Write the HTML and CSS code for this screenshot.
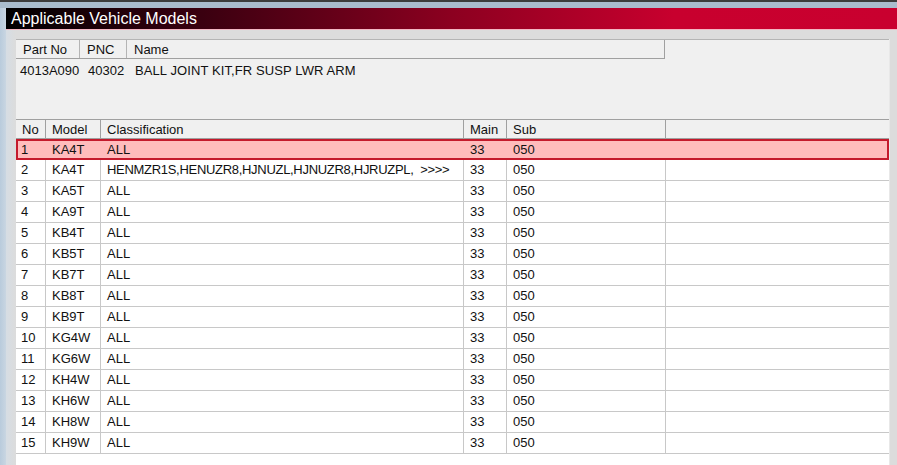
FILE: index.html
```html
<!DOCTYPE html>
<html>
<head>
<meta charset="utf-8">
<link rel="stylesheet" href="styles.css">
</head>
<body>
<div class="screen">
  <div class="topbar"></div>
  <div class="frame">
    <div class="leftstrip"></div>
    <div class="window">
      <div class="title">Applicable Vehicle Models</div>
      <div class="titleline"></div>
      <div class="content">
        <div class="panel">
          <div class="parts">
            <div class="phead">
              <div class="hc c-part">Part No</div>
              <div class="hc c-pnc">PNC</div>
              <div class="hc c-name">Name</div>
            </div>
            <div class="prow">
              <div class="pc c-part">4013A090</div>
              <div class="pc c-pnc">40302</div>
              <div class="pc c-name">BALL JOINT KIT,FR SUSP LWR ARM</div>
            </div>
          </div>
          <div class="grid">
            <div class="ghead">
              <div class="gh g-no">No</div>
              <div class="gh g-model">Model</div>
              <div class="gh g-class">Classification</div>
              <div class="gh g-main">Main</div>
              <div class="gh g-sub">Sub</div>
              <div class="gh g-rest"></div>
            </div>
            <div class="gbody">
              <div class="grow sel"><div class="gc g-no">1</div><div class="gc g-model">KA4T</div><div class="gc g-class">ALL</div><div class="gc g-main">33</div><div class="gc g-sub">050</div><div class="gc g-rest"></div></div>
              <div class="grow"><div class="gc g-no">2</div><div class="gc g-model">KA4T</div><div class="gc g-class long">HENMZR1S,HENUZR8,HJNUZL,HJNUZR8,HJRUZPL,&nbsp; &gt;&gt;&gt;&gt;</div><div class="gc g-main">33</div><div class="gc g-sub">050</div><div class="gc g-rest"></div></div>
              <div class="grow"><div class="gc g-no">3</div><div class="gc g-model">KA5T</div><div class="gc g-class">ALL</div><div class="gc g-main">33</div><div class="gc g-sub">050</div><div class="gc g-rest"></div></div>
              <div class="grow"><div class="gc g-no">4</div><div class="gc g-model">KA9T</div><div class="gc g-class">ALL</div><div class="gc g-main">33</div><div class="gc g-sub">050</div><div class="gc g-rest"></div></div>
              <div class="grow"><div class="gc g-no">5</div><div class="gc g-model">KB4T</div><div class="gc g-class">ALL</div><div class="gc g-main">33</div><div class="gc g-sub">050</div><div class="gc g-rest"></div></div>
              <div class="grow"><div class="gc g-no">6</div><div class="gc g-model">KB5T</div><div class="gc g-class">ALL</div><div class="gc g-main">33</div><div class="gc g-sub">050</div><div class="gc g-rest"></div></div>
              <div class="grow"><div class="gc g-no">7</div><div class="gc g-model">KB7T</div><div class="gc g-class">ALL</div><div class="gc g-main">33</div><div class="gc g-sub">050</div><div class="gc g-rest"></div></div>
              <div class="grow"><div class="gc g-no">8</div><div class="gc g-model">KB8T</div><div class="gc g-class">ALL</div><div class="gc g-main">33</div><div class="gc g-sub">050</div><div class="gc g-rest"></div></div>
              <div class="grow"><div class="gc g-no">9</div><div class="gc g-model">KB9T</div><div class="gc g-class">ALL</div><div class="gc g-main">33</div><div class="gc g-sub">050</div><div class="gc g-rest"></div></div>
              <div class="grow"><div class="gc g-no">10</div><div class="gc g-model">KG4W</div><div class="gc g-class">ALL</div><div class="gc g-main">33</div><div class="gc g-sub">050</div><div class="gc g-rest"></div></div>
              <div class="grow"><div class="gc g-no">11</div><div class="gc g-model">KG6W</div><div class="gc g-class">ALL</div><div class="gc g-main">33</div><div class="gc g-sub">050</div><div class="gc g-rest"></div></div>
              <div class="grow"><div class="gc g-no">12</div><div class="gc g-model">KH4W</div><div class="gc g-class">ALL</div><div class="gc g-main">33</div><div class="gc g-sub">050</div><div class="gc g-rest"></div></div>
              <div class="grow"><div class="gc g-no">13</div><div class="gc g-model">KH6W</div><div class="gc g-class">ALL</div><div class="gc g-main">33</div><div class="gc g-sub">050</div><div class="gc g-rest"></div></div>
              <div class="grow"><div class="gc g-no">14</div><div class="gc g-model">KH8W</div><div class="gc g-class">ALL</div><div class="gc g-main">33</div><div class="gc g-sub">050</div><div class="gc g-rest"></div></div>
              <div class="grow"><div class="gc g-no">15</div><div class="gc g-model">KH9W</div><div class="gc g-class">ALL</div><div class="gc g-main">33</div><div class="gc g-sub">050</div><div class="gc g-rest"></div></div>
            </div>
          </div>
        </div>
        <div class="scrollstrip"></div>
      </div>
    </div>
  </div>
</div>
</body>
</html>
```
FILE: styles.css
```css
* { box-sizing: border-box; }
html, body { margin: 0; padding: 0; }
body {
  width: 897px;
  height: 465px;
  overflow: hidden;
  font-family: "Liberation Sans", Arial, sans-serif;
  font-size: 13px;
  color: #111;
  background: #dcdcdc;
}
.screen { width: 897px; height: 465px; display: flex; flex-direction: column; }
.topbar {
  height: 8px;
  flex: none;
  background: linear-gradient(#3c3c3c 0, #3c3c3c 2px, #a9bccd 2px, #a9bccd 100%);
}
.frame { flex: 1; display: flex; min-height: 0; }
.leftstrip {
  width: 6px;
  flex: none;
  background: linear-gradient(90deg, #b9cbdc, #c9d6e2);
}
.window { flex: 1; display: flex; flex-direction: column; min-width: 0; background: #dcdcdc; }
.title {
  height: 21px;
  flex: none;
  padding-left: 5px;
  color: #fff;
  font-size: 16px;
  line-height: 21px;
  background: linear-gradient(90deg, #000 0%, #3a0010 22%, #8c0020 50%, #c8002e 75%, #c9002f 100%);
}
.titleline { height: 1px; flex: none; background: #f3b7c4; }
.content {
  flex: 1;
  display: flex;
  padding: 9px 0 0 10px;
  min-height: 0;
  background: linear-gradient(90deg, #d6dde4 0, #dcdcdc 10px);
}
.panel {
  flex: 1;
  display: flex;
  flex-direction: column;
  background: #f0f0f0;
  border-top: 1px solid #b4b4b4;
  min-width: 0;
}
.scrollstrip { width: 8px; flex: none; background: #dcdcdc; border-left: 1px solid #e8e8e8; }

/* parts header */
.parts { height: 79px; flex: none; }
.phead { display: flex; width: 649px; height: 19px; border-bottom: 1px solid #a0a0a0; border-right: 1px solid #a0a0a0; }
.hc { height: 18px; line-height: 20px; padding-left: 7px; border-right: 1px solid #b4b4b4; }
.hc.c-name { border-right: none; }
.c-part { width: 64px; }
.c-pnc { width: 47px; }
.c-name { flex: 1; }
.prow { display: flex; height: 23px; line-height: 23px; }
.pc { padding-left: 4px; }
.prow .c-part { width: 64px; }
.prow .c-pnc { width: 47px; padding-left: 8px; }
.prow .c-name { padding-left: 8px; letter-spacing: 0.1px; }

/* grid */
.grid { flex: 1; display: flex; flex-direction: column; background: #fff; min-height: 0; }
.ghead { display: flex; height: 20px; flex: none; background: #f0f0f0; border-top: 1px solid #a0a0a0; border-bottom: 1px solid #a0a0a0; }
.gh { height: 18px; line-height: 19px; padding-left: 6px; border-right: 1px solid #a0a0a0; }
.gh.g-rest { border-right: none; }
.g-no { width: 30px; }
.g-model { width: 55px; }
.g-class { width: 363px; }
.g-main { width: 43px; }
.g-sub { width: 159px; }
.g-rest { flex: 1; }
.gbody { flex: 1; background: #fff; }
.grow { display: flex; height: 21px; border-bottom: 1px solid #c8c8c8; }
.gc { height: 20px; line-height: 20px; padding-left: 6px; border-right: 1px solid #c8c8c8; white-space: nowrap; overflow: hidden; }
.gc.long { letter-spacing: -0.3px; }
.gc.g-rest { border-right: none; }
.gc.g-no { padding-left: 5px; }
.grow.sel { background: #ffbcbc; border: 2px solid #c41a2c; }
.grow.sel .gc { height: 17px; line-height: 17px; border-right-color: transparent; }
.grow.sel .gc.g-no { width: 28px; padding-left: 3px; }
```
